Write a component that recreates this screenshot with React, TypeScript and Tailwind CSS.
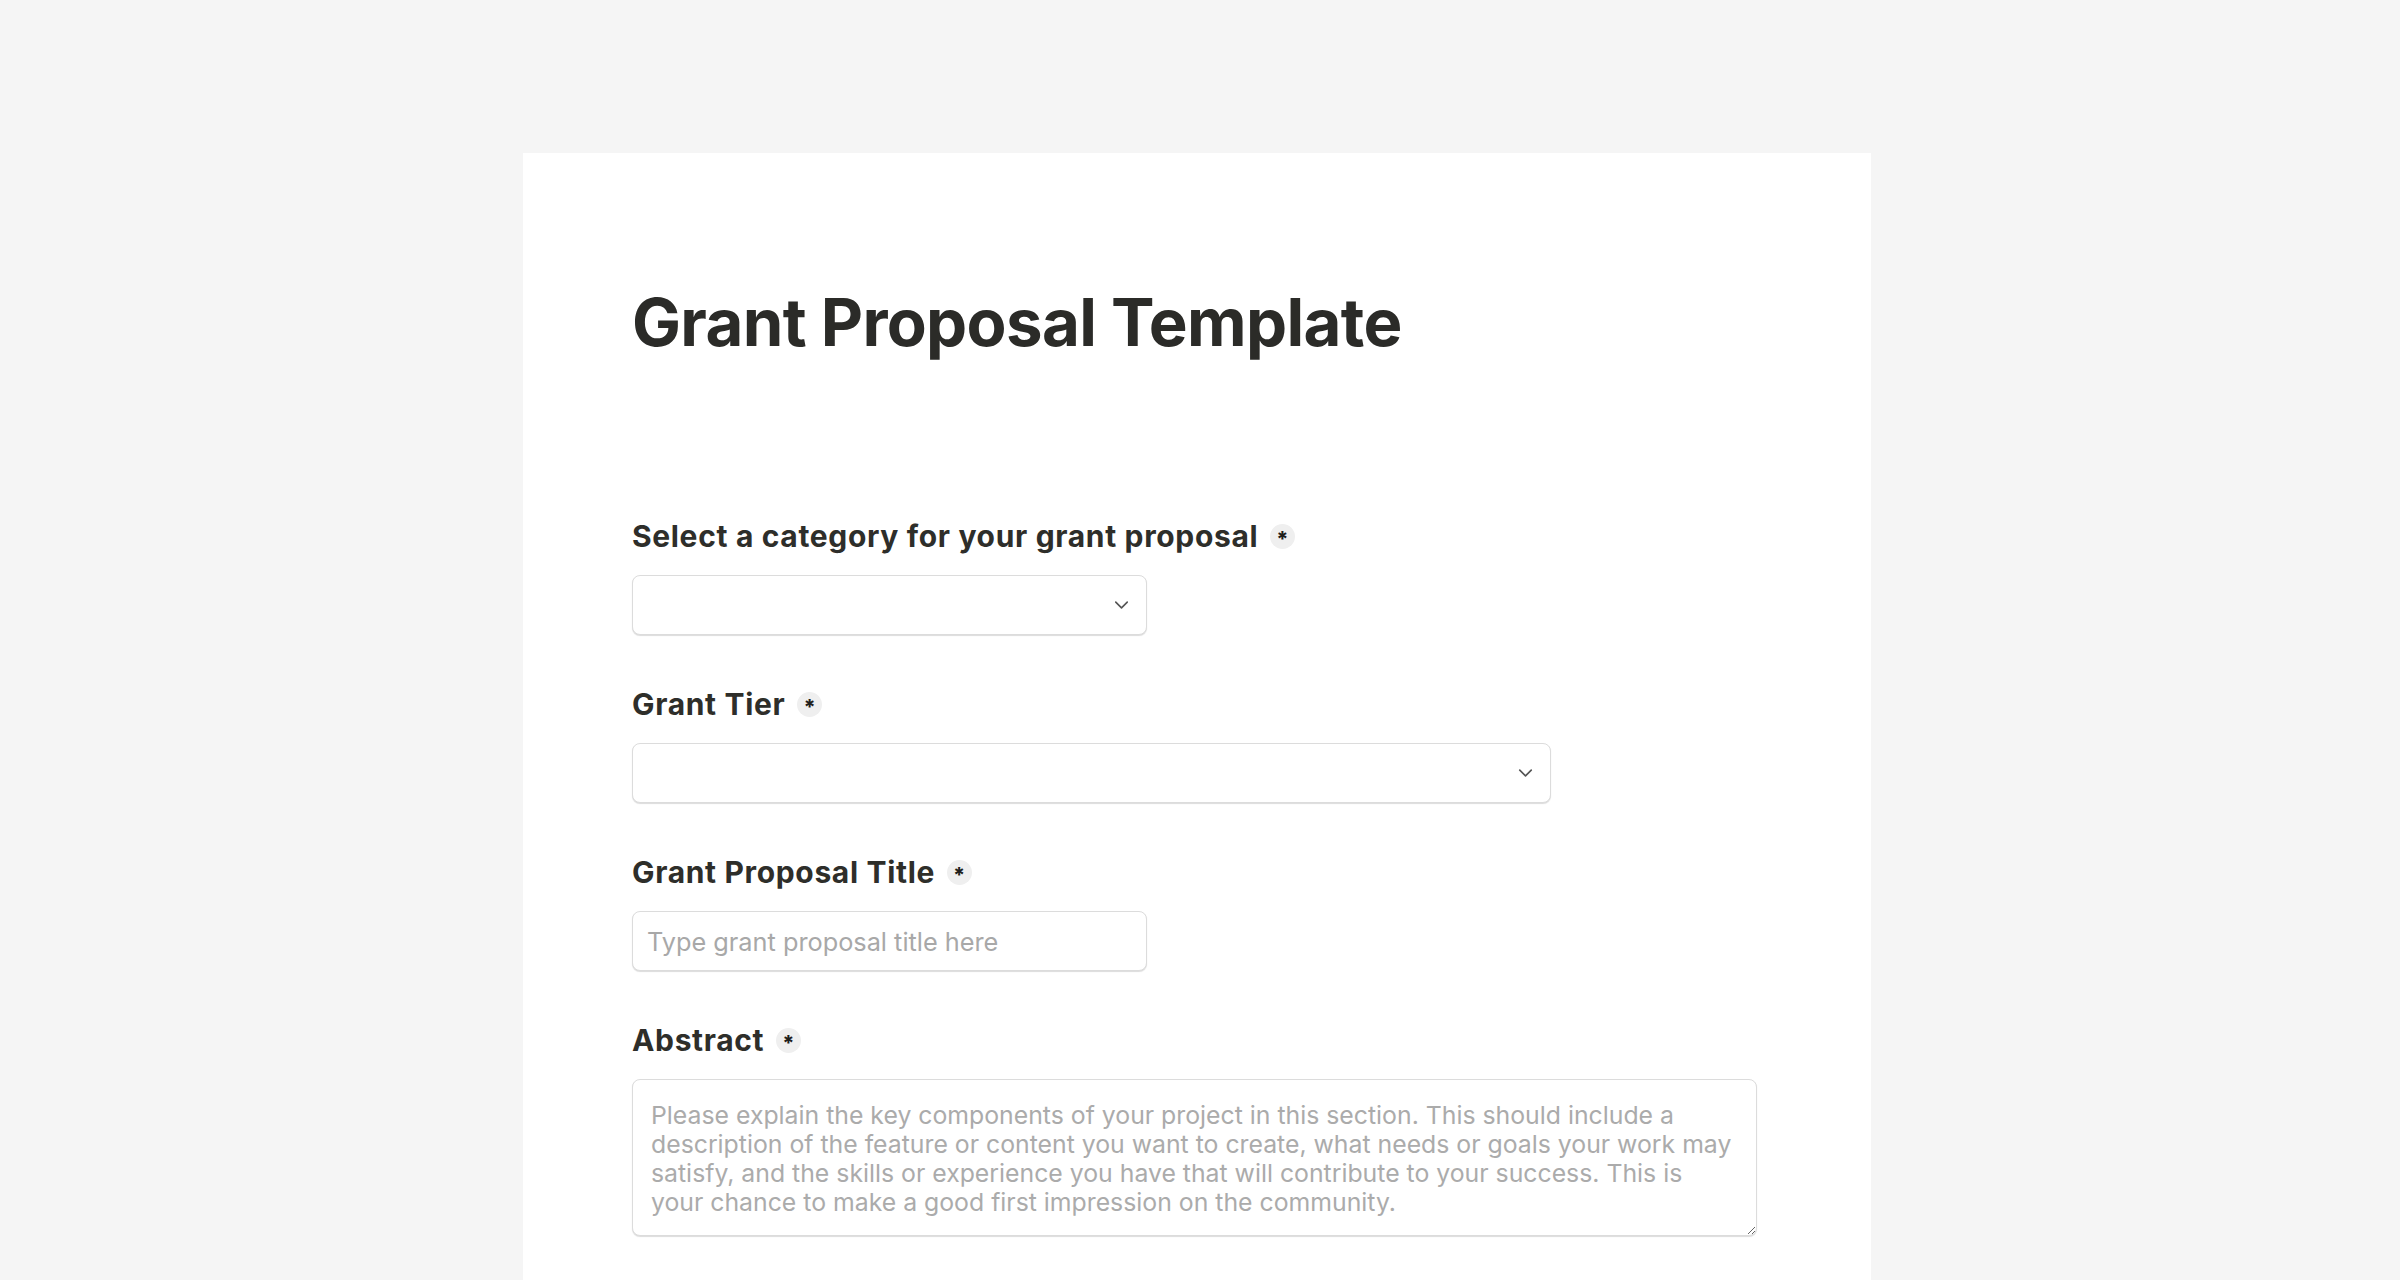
import { ChevronDown } from 'lucide-react'

const font = { fontFamily: 'Inter, "Noto Sans", sans-serif' }

function Required() {
  return (
    <span className="ml-[12px] inline-flex h-[25px] w-[25px] items-center justify-center rounded-full bg-[#efefef] text-[21px] font-extrabold leading-none text-[#1f1f1c]">
      <span className="mt-[7px]">*</span>
    </span>
  )
}

function Label({ children }: { children: React.ReactNode }) {
  return (
    <label className="flex h-[36px] items-center text-[30px] font-bold leading-[36px] tracking-[0.022em] text-[#2e2e2a]">
      {children}
      <Required />
    </label>
  )
}

const boxCls =
  'rounded-[8px] border border-[#dcdcdc] bg-white shadow-[0_1px_1px_rgba(0,0,0,0.14)] outline-none'

function Select({ width }: { width: string }) {
  return (
    <div className={`relative mt-[21px] h-[60px] ${width}`}>
      <select className={`h-full w-full appearance-none px-[13px] text-[24px] ${boxCls}`} style={font} defaultValue="">
        <option value="" disabled hidden></option>
      </select>
      <ChevronDown
        className="pointer-events-none absolute right-[14px] top-1/2 -translate-y-1/2 text-[#555555]"
        size={23}
        strokeWidth={1.7}
      />
    </div>
  )
}

const abstract =
  'Please explain the key components of your project in this section. This should include a\n' +
  'description of the feature or content you want to create, what needs or goals your work may\n' +
  'satisfy, and the skills or experience you have that will contribute to your success. This is\n' +
  'your chance to make a good first impression on the community.'

export default function App() {
  return (
    <div className="min-h-screen bg-[#f5f5f5] pt-[153px]" style={font}>
      <div className="ml-[523px] w-[1348px] bg-white pb-[80px] pl-[109px] pr-[100px] pt-[131px]">
        <h1 className="text-[65.3px] font-bold leading-[77px] tracking-[-0.01em] text-[#2b2b28]">
          Grant Proposal Template
        </h1>

        <div className="mt-[157px] flex flex-col gap-[51px]">
          <div>
            <Label>Select a category for your grant proposal</Label>
            <Select width="w-[515px]" />
          </div>

          <div>
            <Label>Grant Tier</Label>
            <Select width="w-[919px]" />
          </div>

          <div>
            <Label>Grant Proposal Title</Label>
            <input
              type="text"
              placeholder="Type grant proposal title here"
              className={`mt-[21px] h-[60px] w-[515px] px-[14px] text-[25.3px] text-[#2b2b28] placeholder:text-[#a8a8a8] ${boxCls}`}
              style={font}
            />
          </div>

          <div>
            <Label>Abstract</Label>
            <textarea
              placeholder={abstract}
              className={`mt-[21px] block h-[157px] w-[1125px] px-[18px] pb-[14px] pt-[21px] text-[24.8px] leading-[29px] text-[#2b2b28] placeholder:text-[#ababab] ${boxCls}`}
              style={font}
            />
          </div>
        </div>
      </div>
    </div>
  )
}
